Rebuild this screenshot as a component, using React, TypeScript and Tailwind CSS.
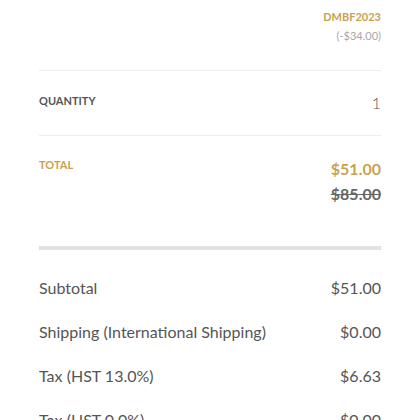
const ROWS = [
  { label: "Subtotal", value: "$51.00" },
  { label: "Shipping (International Shipping)", value: "$0.00" },
  { label: "Tax (HST 13.0%)", value: "$6.63" },
  { label: "Tax (HST 0.0%)", value: "$0.00" },
];

export default function App() {
  return (
    <div className="h-[420px] overflow-hidden bg-white px-[39px] font-['Lato','Liberation_Sans',sans-serif]">
      {/* DISCOUNT */}
      <div className="flex flex-col items-end pt-[10px] pb-[27px] border-b border-[#ececec]">
        <div className="text-[11px] leading-[14px] font-bold text-[#c9a24f]">DMBF2023</div>
        <div className="mt-[5px] text-[11px] leading-[14px] text-[#a8a8a8]">(-$34.00)</div>
      </div>

      {/* QUANTITY */}
      <div className="flex justify-between h-[65px] pt-[23px] border-b border-[#ececec]">
        <div className="text-[11px] leading-[14px] font-bold text-[#555]">QUANTITY</div>
        <div className="text-[16px] leading-[20px] mt-[-1px] font-light text-[#555]">1</div>
      </div>

      {/* TOTAL */}
      <div className="flex justify-between pt-[22px] pb-[42px] border-b-4 border-[#e2e2e2]">
        <div className="text-[11px] leading-[14px] font-bold text-[#c9a24f]">TOTAL</div>
        <div className="flex flex-col items-end">
          <div className="text-[16px] leading-[20px] mt-[1px] font-bold text-[#c9a24f]">$51.00</div>
          <div className="text-[16px] leading-[20px] mt-[5px] font-bold text-[#666] line-through">$85.00</div>
        </div>
      </div>

      {/* SUMMARY */}
      <div className="pt-[28px] flex flex-col gap-[24px]">
        {ROWS.map((r) => (
          <div key={r.label} className="flex justify-between text-[16px] leading-[20px] text-[#555]">
            <span>{r.label}</span>
            <span>{r.value}</span>
          </div>
        ))}
      </div>
    </div>
  );
}
